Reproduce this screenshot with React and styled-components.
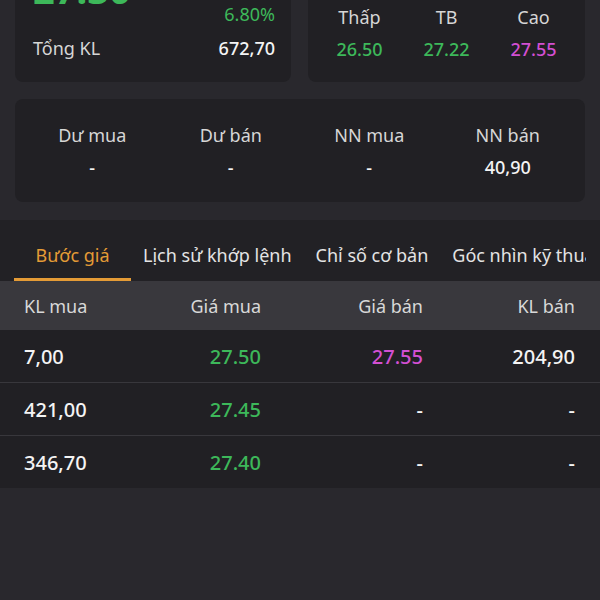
import React from "react";
import styled, { createGlobalStyle } from "styled-components";

const GREEN = "#3db85a";
const PURPLE = "#d24fd2";
const ORANGE = "#e49b36";

const GlobalStyle = createGlobalStyle`
  body {
    margin: 0;
    background-color: #29282d;
    font-family: "Noto Sans", "Open Sans", sans-serif;
    color: #f2f2f2;
    overflow: hidden;
  }
`;

const Page = styled.div`
  min-height: 100vh;
  overflow: hidden;
`;

// the screen is scrolled a little, so the top of the first cards is cut off
const Scrolled = styled.div`
  margin-top: -47px;
`;

const TopGrid = styled.div`
  display: grid;
  grid-template-columns: 276px 277px;
  gap: 17px;
  padding: 0 15px;
`;

const Card = styled.div`
  background-color: #212024;
  border-radius: 8px;
`;

const PriceCard = styled(Card)`
  padding: 16px 16px 19px 18px;
`;

const PriceRow = styled.div`
  display: flex;
  justify-content: space-between;
  align-items: flex-start;
`;

const BigPrice = styled.div`
  font-size: 38px;
  font-weight: 700;
  line-height: 44px;
  margin-top: -2px;
  color: ${GREEN};
`;

const ChangeCol = styled.div`
  padding-top: 30px;
  text-align: right;
  font-size: 18px;
  line-height: 30px;
  color: ${GREEN};
`;

const InfoRow = styled.div`
  display: flex;
  justify-content: space-between;
  margin-top: 4px;
  font-size: 18px;
  line-height: 30px;
`;

const Label = styled.span`
  color: #d6d6d6;
`;

const Value = styled.span`
  color: ${(p) => p.$color || "#f4f4f4"};
  font-weight: 500;
`;

const StatCard = styled(Card)`
  display: grid;
  grid-template-columns: repeat(${(p) => p.$cols}, 1fr);
  padding: ${(p) => p.$pad};
  text-align: center;
  font-size: 18px;
  line-height: 32px;
`;

const WideCard = styled(StatCard)`
  margin: 17px 15px 0;
`;

const TabBar = styled.div`
  margin-top: 18px;
  padding-top: 12px;
  background-color: #222125;
`;

const TabScroll = styled.div`
  display: flex;
  overflow: hidden;
  margin-right: 14px;
  padding-left: 14px;
`;

const Tab = styled.div`
  flex-shrink: 0;
  box-sizing: border-box;
  min-width: 117px;
  padding: 0 12px;
  height: 49px;
  line-height: 46px;
  text-align: center;
  white-space: nowrap;
  font-size: 18px;
  color: ${(p) => (p.$active ? ORANGE : "#e4e4e4")};
  border-bottom: 3px solid ${(p) => (p.$active ? ORANGE : "transparent")};
`;

const TableRow = styled.div`
  display: grid;
  grid-template-columns: 1fr 140px 162px 152px;
  align-items: center;
  padding: 0 25px 0 24px;
`;

const HeaderRow = styled(TableRow)`
  height: 49px;
  background-color: #39383d;
  color: #d8d8d8;
  font-size: 18px;
`;

const BookRow = styled(TableRow)`
  height: 52px;
  background-color: #212024;
  font-size: 20px;
  font-weight: 500;
  & + & {
    border-top: 1px solid #38373c;
  }
`;

const Cell = styled.div`
  text-align: ${(p) => (p.$left ? "left" : "right")};
  color: ${(p) => p.$color || "#f4f4f4"};
`;

const tabs = ["Bước giá", "Lịch sử khớp lệnh", "Chỉ số cơ bản", "Góc nhìn kỹ thuật"];

const book = [
  { kl: "7,00", buy: "27.50", sell: "27.55", klSell: "204,90" },
  { kl: "421,00", buy: "27.45", sell: "-", klSell: "-" },
  { kl: "346,70", buy: "27.40", sell: "-", klSell: "-" },
];

const App = () => (
  <Page>
    <GlobalStyle />
    <Scrolled>
      <TopGrid>
        <PriceCard>
          <PriceRow>
            <BigPrice>27.30</BigPrice>
            <ChangeCol>6.80%</ChangeCol>
          </PriceRow>
          <InfoRow>
            <Label>Tổng KL</Label>
            <Value>672,70</Value>
          </InfoRow>
        </PriceCard>
        <StatCard $cols={3} $pad="48px 8px 17px">
          <Label>Thấp</Label>
          <Label>TB</Label>
          <Label>Cao</Label>
          <Value $color={GREEN}>26.50</Value>
          <Value $color={GREEN}>27.22</Value>
          <Value $color={PURPLE}>27.55</Value>
        </StatCard>
      </TopGrid>
    </Scrolled>

    <WideCard $cols={4} $pad="20px 8px 19px">
      <Label>Dư mua</Label>
      <Label>Dư bán</Label>
      <Label>NN mua</Label>
      <Label>NN bán</Label>
      <Value>-</Value>
      <Value>-</Value>
      <Value>-</Value>
      <Value>40,90</Value>
    </WideCard>

    <TabBar>
      <TabScroll>
        {tabs.map((t, i) => (
          <Tab key={t} $active={i === 0}>
            {t}
          </Tab>
        ))}
      </TabScroll>
    </TabBar>

    <HeaderRow>
      <Cell $left $color="#d8d8d8">KL mua</Cell>
      <Cell $color="#d8d8d8">Giá mua</Cell>
      <Cell $color="#d8d8d8">Giá bán</Cell>
      <Cell $color="#d8d8d8">KL bán</Cell>
    </HeaderRow>
    {book.map((r) => (
      <BookRow key={r.kl}>
        <Cell $left>{r.kl}</Cell>
        <Cell $color={GREEN}>{r.buy}</Cell>
        <Cell $color={r.sell === "-" ? undefined : PURPLE}>{r.sell}</Cell>
        <Cell>{r.klSell}</Cell>
      </BookRow>
    ))}
  </Page>
);

export default App;
